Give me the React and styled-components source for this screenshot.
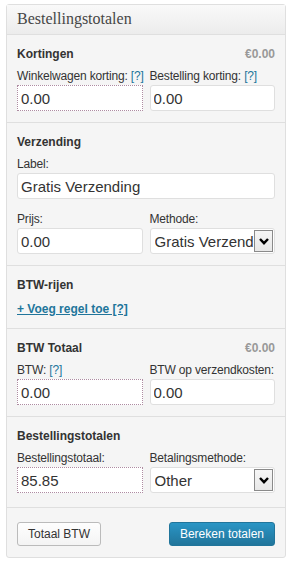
import styled, { createGlobalStyle } from 'styled-components';

const GlobalStyle = createGlobalStyle`
  body {
    margin: 0;
    background: #fff;
    font-family: "Liberation Sans", Arial, sans-serif;
    color: #333;
  }
`;

const Panel = styled.div`
  width: 280px;
  margin: 4px 0 0 6px;
  box-sizing: border-box;
  border: 1px solid #dfdfdf;
  border-radius: 3px;
  background: #f5f5f5;
`;

const PanelHeader = styled.h3`
  margin: 0;
  height: 30px;
  box-sizing: border-box;
  padding: 0 10px 1px;
  display: flex;
  align-items: center;
  border-bottom: 1px solid #dfdfdf;
  background: linear-gradient(to bottom, #f9f9f9, #ececec);
  font-family: "Liberation Serif", Georgia, serif;
  font-size: 16px;
  font-weight: normal;
  color: #464646;
`;

const Group = styled.div`
  padding: 11px 10px ${(p) => (p.$tall ? '14px' : '11px')};
  border-bottom: 1px solid #dfdfdf;
`;

const GroupTitle = styled.h4`
  margin: 0 0 7px;
  display: flex;
  justify-content: space-between;
  font-size: 12px;
  line-height: 16px;
  font-weight: bold;
  color: #333;
`;

const Amount = styled.span`
  color: #999;
`;

const FieldRow = styled.div`
  display: grid;
  grid-template-columns: ${(p) => (p.$wide ? '1fr' : '1fr 1fr')};
  gap: 7px;
  & + & {
    margin-top: 13px;
  }
`;

const Field = styled.div`
  display: flex;
  flex-direction: column;
  min-width: 0;
`;

const FieldLabel = styled.label`
  font-size: 12px;
  line-height: 14px;
  letter-spacing: -0.17px;
  margin-bottom: 2px;
  color: #333;
  white-space: nowrap;
`;

const Help = styled.span`
  color: #21759b;
`;

const TextInput = styled.input`
  height: 26px;
  width: 100%;
  box-sizing: border-box;
  padding: 0 3px;
  border: 1px ${(p) => (p.$calculated ? 'dotted #ae8ca2' : 'solid #dfdfdf')};
  border-radius: ${(p) => (p.$calculated ? '0' : '3px')};
  background: #fff;
  font-family: "Liberation Sans", Arial, sans-serif;
  font-size: 15px;
  color: #333;
  outline: none;
`;

const SelectWrap = styled.div`
  position: relative;
  height: 26px;
`;

const Select = styled.select`
  appearance: none;
  width: 100%;
  height: 26px;
  box-sizing: border-box;
  padding: 0 2px 0 4px;
  border: 1px solid #dfdfdf;
  border-radius: 3px;
  background: #fff;
  font-family: "Liberation Sans", Arial, sans-serif;
  font-size: 15px;
  color: #333;
  outline: none;
`;

const SelectArrow = styled.span`
  position: absolute;
  top: 2px;
  bottom: 2px;
  right: 2px;
  width: 19px;
  box-sizing: border-box;
  border: 1px solid #8a8a8a;
  background: linear-gradient(to bottom, #f6f6f6, #e8e8e8);
  display: flex;
  align-items: center;
  justify-content: center;
  pointer-events: none;
`;

const AddLink = styled.a`
  display: block;
  margin: 9px 0 1px;
  font-size: 12px;
  line-height: 14px;
  font-weight: bold;
  color: #21759b;
  text-decoration: underline;
`;

const Footer = styled.div`
  display: flex;
  justify-content: space-between;
  align-items: center;
  padding: 14px 10px 11px;
`;

const Button = styled.button`
  height: 24px;
  box-sizing: border-box;
  padding: 0 10px;
  border-radius: 3px;
  border: 1px solid ${(p) => (p.$primary ? '#21759b' : '#bbb')};
  background: ${(p) =>
    p.$primary
      ? 'linear-gradient(to bottom, #2a95c5, #21759b)'
      : 'linear-gradient(to bottom, #fefefe, #f4f4f4)'};
  color: ${(p) => (p.$primary ? '#fff' : '#333')};
  font-family: "Liberation Sans", Arial, sans-serif;
  font-size: 12px;
  cursor: pointer;
`;

function Chevron() {
  return (
    <svg width="10" height="7" viewBox="0 0 10 7">
      <polyline points="1,1 5,5.2 9,1" fill="none" stroke="#000" strokeWidth="2.4" />
    </svg>
  );
}

function Dropdown({ value }) {
  return (
    <SelectWrap>
      <Select defaultValue={value}>
        <option>{value}</option>
      </Select>
      <SelectArrow>
        <Chevron />
      </SelectArrow>
    </SelectWrap>
  );
}

export default function App() {
  return (
    <>
      <GlobalStyle />
      <Panel>
        <PanelHeader>Bestellingstotalen</PanelHeader>

        <Group>
          <GroupTitle>
            Kortingen <Amount>€0.00</Amount>
          </GroupTitle>
          <FieldRow>
            <Field>
              <FieldLabel>
                Winkelwagen korting: <Help>[?]</Help>
              </FieldLabel>
              <TextInput $calculated defaultValue="0.00" />
            </Field>
            <Field>
              <FieldLabel>
                Bestelling korting: <Help>[?]</Help>
              </FieldLabel>
              <TextInput defaultValue="0.00" />
            </Field>
          </FieldRow>
        </Group>

        <Group>
          <GroupTitle>Verzending</GroupTitle>
          <FieldRow $wide>
            <Field>
              <FieldLabel>Label:</FieldLabel>
              <TextInput defaultValue="Gratis Verzending" />
            </Field>
          </FieldRow>
          <FieldRow>
            <Field>
              <FieldLabel>Prijs:</FieldLabel>
              <TextInput defaultValue="0.00" />
            </Field>
            <Field>
              <FieldLabel>Methode:</FieldLabel>
              <Dropdown value="Gratis Verzending" />
            </Field>
          </FieldRow>
        </Group>

        <Group>
          <GroupTitle>BTW-rijen</GroupTitle>
          <AddLink href="#">+ Voeg regel toe [?]</AddLink>
        </Group>

        <Group>
          <GroupTitle>
            BTW Totaal <Amount>€0.00</Amount>
          </GroupTitle>
          <FieldRow>
            <Field>
              <FieldLabel>
                BTW: <Help>[?]</Help>
              </FieldLabel>
              <TextInput $calculated defaultValue="0.00" />
            </Field>
            <Field>
              <FieldLabel>BTW op verzendkosten:</FieldLabel>
              <TextInput defaultValue="0.00" />
            </Field>
          </FieldRow>
        </Group>

        <Group $tall>
          <GroupTitle>Bestellingstotalen</GroupTitle>
          <FieldRow>
            <Field>
              <FieldLabel>Bestellingstotaal:</FieldLabel>
              <TextInput $calculated defaultValue="85.85" />
            </Field>
            <Field>
              <FieldLabel>Betalingsmethode:</FieldLabel>
              <Dropdown value="Other" />
            </Field>
          </FieldRow>
        </Group>

        <Footer>
          <Button>Totaal BTW</Button>
          <Button $primary>Bereken totalen</Button>
        </Footer>
      </Panel>
    </>
  );
}
